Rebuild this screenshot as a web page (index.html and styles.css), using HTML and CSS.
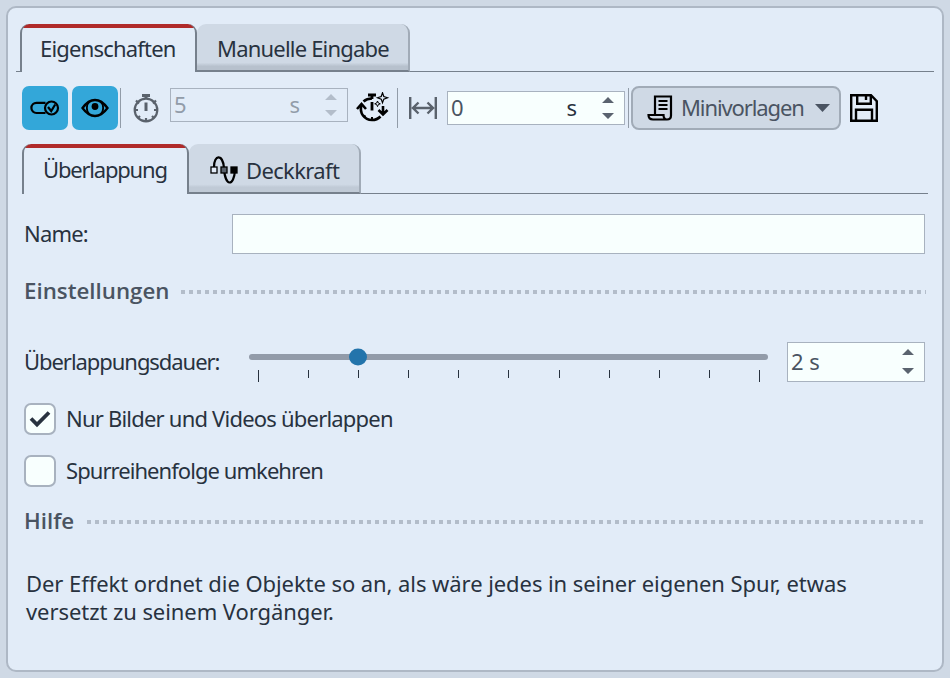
FILE: index.html
```
<!DOCTYPE html>
<html lang="de">
<head>
  <meta charset="UTF-8">
  <meta name="viewport" content="width=device-width, initial-scale=1.0">
  <title>Eigenschaften</title>
  <link rel="stylesheet" href="styles.css">
</head>
<body>
  <main class="panel">
    <nav class="tabs main-tabs">
      <div class="tab active"><span class="t-props">Eigenschaften</span></div>
      <div class="tab"><span class="t-manual">Manuelle Eingabe</span></div>
    </nav>

    <div class="toolbar">
      <button class="toggle" aria-label="Aktiv">
        <svg width="46" height="44" viewBox="0 0 46 44" fill="none" stroke="#000" stroke-width="2.200">
          <path d="M23.500 16.800H14.500a5 5 0 0 0 0 10.200H23.500"/>
          <circle cx="29.500" cy="22" r="6.500"/>
          <path d="M26 21l3.200 4 4-6.500"/>
        </svg>
      </button>
      <button class="toggle" aria-label="Sichtbar">
        <svg width="46" height="44" viewBox="0 0 46 44" fill="none" stroke="#000" stroke-width="2.300">
          <path d="M10.500 22c4-5.500 8-8 12.500-8s8.500 2.500 12.500 8c-4 5.500-8 8-12.500 8s-8.500-2.500-12.500-8z"/>
          <path d="M17.500 15.500c-3.500 3-3.500 10 0 13M28.500 15.500c3.500 3 3.500 10 0 13" stroke-width="1.800"/>
          <circle cx="23" cy="20.500" r="3.400" fill="#000" stroke="none"/>
        </svg>
      </button>
      <span class="separator"></span>
      <svg class="icon-watch" width="26" height="30" viewBox="0 0 26 30" fill="none" stroke="#5a626c" stroke-width="2.200">
        <circle cx="13" cy="17" r="11.300"/>
        <path d="M9 2.500h8M13 2v4M13 9.500v8.500" stroke-width="3"/>
        <path d="M3 7.500l3 3M23 7.500l-3 3M2 17h3M24 17h-3M13 28v-3M5 25l2-2M21 25l-2-2"/>
      </svg>
      <div class="spin disabled">
        <span>5</span><span class="unit">s</span>
        <svg class="arrows" width="12" height="22" viewBox="0 0 12 22"><path d="M0 6L6 0l6 6zM0 16h12l-6 6z"/></svg>
      </div>
      <svg class="icon-auto" width="34" height="32" viewBox="0 0 34 32" fill="none" stroke="#000" stroke-width="2.600">
        <path d="M12 3h8M16 3v4M16 10v8.500" stroke-width="2.800"/>
        <path d="M7.500 9.500c2-1.800 4.500-3 8.500-3M5.500 13c-2.500 8 3 15 10.500 15 3.500 0 6.500-1.500 8.500-3.500"/>
        <path d="M1 17l4.500-5 4.500 5M27 14v8M22.500 18l4.500 4.500 4.500-4.500"/>
        <path d="M16 28v-3M8 25l1.500-1.500" stroke-width="2"/>
        <path d="M26.500 .8l1.300 3.700 3.700 1.300-3.700 1.300-1.300 3.700-1.300-3.700-3.700-1.300 3.700-1.300z" stroke-width="1.200"/>
        <path d="M21.500 9l.8 2 2 .8-2 .8-.8 2-.8-2-2-.8 2-.8z" stroke-width="1"/>
      </svg>
      <span class="separator"></span>
      <svg class="icon-width" width="28" height="22" viewBox="0 0 28 22" fill="none" stroke="#5a626c" stroke-width="2.400">
        <path d="M1.200 0v22M26.800 0v22M4 11h20M9.500 5.500L4 11l5.500 5.500M18.500 5.500L24 11l-5.500 5.500"/>
      </svg>
      <div class="spin offset">
        <span>0</span><span class="unit">s</span>
        <svg class="arrows" width="12" height="22" viewBox="0 0 12 22"><path d="M0 6L6 0l6 6zM0 16h12l-6 6z"/></svg>
      </div>
      <span class="separator"></span>
      <button class="presets">
        <svg width="26" height="26" viewBox="0 0 26 26" fill="none" stroke="#000" stroke-width="2.200">
          <path d="M8 19V1.500h16v19c0 3-1.500 4-4 4H6c-3 0-4.500-1.500-4.500-4.500h15c0 3 1 4.500 3.500 4.500"/>
          <path d="M11.500 6h9M11.500 10h9M11.500 14h9" stroke-width="1.800"/>
        </svg>
        <span class="t-presets">Minivorlagen</span>
        <svg class="drop" width="15" height="8" viewBox="0 0 15 8"><path d="M0 0h15L7.500 8z" fill="#4a5462"/></svg>
      </button>
      <svg class="icon-save" width="28" height="28" viewBox="0 0 28 28" fill="none" stroke="#000" stroke-width="2.400">
        <path d="M1.200 1.200h19.800l5.800 6v19.600H1.200zM7.200 1.500v8.300h13.600V1.500M16 2v4M6 26.500V15.800h16v10.700"/>
      </svg>
    </div>

    <nav class="tabs sub-tabs">
      <div class="tab active"><span class="t-overlap">Überlappung</span></div>
      <div class="tab">
        <svg width="28" height="28" viewBox="0 0 28 28" fill="none" stroke="#000">
          <path d="M4 11C4-2 13-2 14 12c1 19 10 19 11 2" stroke-width="2.200"/>
          <rect x="1" y="11" width="6" height="6" fill="#e3ecf8" stroke-width="1.300"/>
          <rect x="11" y="11" width="6" height="6" fill="#5a626c" stroke-width="1.300"/>
          <rect x="21" y="11" width="6" height="6" fill="#000" stroke-width="1.300"/>
        </svg>
        <span class="t-opacity">Deckkraft</span>
      </div>
    </nav>

    <section class="form">
      <div class="name-row">
        <label class="t-name" for="name">Name:</label>
        <input type="text" id="name">
      </div>

      <h2 class="settings-title"><span>Einstellungen</span></h2>

      <div class="duration-row">
        <span class="t-duration">Überlappungsdauer:</span>
        <div class="slider">
          <div class="track"><span class="thumb"></span></div>
          <div class="ticks"><i></i><i></i><i></i><i></i><i></i><i></i><i></i><i></i><i></i><i></i><i></i></div>
        </div>
        <div class="spin duration">
          <span>2 s</span>
          <svg class="arrows" width="12" height="26" viewBox="0 0 12 26"><path d="M0 6L6 0l6 6zM0 19h12l-6 6z"/></svg>
        </div>
      </div>

      <div class="check-row">
        <span class="checkbox"><svg width="22" height="18" viewBox="0 0 22 18"><path d="M2 8.500l6 6L20 2.500" fill="none" stroke="#28323f" stroke-width="3.800"/></svg></span>
        <span class="t-only">Nur Bilder und Videos überlappen</span>
      </div>
      <div class="check-row">
        <span class="checkbox"></span>
        <span class="t-reverse">Spurreihenfolge umkehren</span>
      </div>

      <h2 class="help-title"><span>Hilfe</span></h2>
      <p class="help">Der Effekt ordnet die Objekte so an, als wäre jedes in seiner eigenen Spur, etwas<br>versetzt zu seinem Vorgänger.</p>
    </section>
  </main>
</body>
</html>
```
FILE: styles.css
```
* {
  margin: 0;
  padding: 0;
  box-sizing: border-box;
}

body {
  height: 678px;
  padding: 6px;
  background: #cfd9e5;
  color: #28323f;
  font-family: 'Noto Sans', sans-serif;
  font-size: 22px;
  line-height: 28px;
  white-space: nowrap;
  overflow: hidden;
}

svg {
  display: block;
  flex: none;
}

.panel {
  width: 938px;
  height: 666px;
  padding-top: 16px;
  background: #e2ecf8;
  border: 2px solid #aeb8c5;
  border-radius: 10px;
}

/* Tabs */
.tabs {
  display: flex;
  background: linear-gradient(#76808c, #76808c) bottom / 100% 1px no-repeat;
}

.main-tabs {
  height: 48px;
  margin: 0 8px;
  padding-left: 4px;
}

.sub-tabs {
  height: 50px;
  margin: 14px 14px 0;
}

.tab {
  display: flex;
  align-items: center;
  background: linear-gradient(#cfd9e5 84%, #b7c1cd 92%);
  border-right: 2px solid #a1abb7;
  border-bottom: 2px solid #76808c;
  border-radius: 9px 9px 0 0;
  padding-left: 20px;
}

.tab.active {
  background: linear-gradient(#b02a2a 4px, #e2ecf8 4px);
  border: 2px solid #76808c;
  border-top: 0;
  border-bottom: 0;
  padding-left: 18px;
}

.main-tabs .tab {
  width: 213px;
}

.main-tabs .active {
  width: 177px;
}

.sub-tabs .tab {
  width: 172px;
  padding: 3px 0 0 21px;
  background: linear-gradient(#cfd9e5 84%, #c0cad6 90%);
}

.sub-tabs .tab.active {
  width: 167px;
  padding: 0 0 0 18px;
  background: linear-gradient(#b02a2a 4px, #e2ecf8 4px);
}

.sub-tabs svg {
  margin-right: 8px;
}

.t-props,
.t-manual {
  letter-spacing: -0.8px;
}

.t-manual {
  padding-top: 2px;
}

.t-overlap {
  padding-left: 1px;
  letter-spacing: -1.2px;
}

.t-opacity {
  letter-spacing: -0.65px;
}

/* Toolbar */
.toolbar {
  display: flex;
  align-items: center;
  height: 44px;
  margin: 14px 0 0 14px;
}

button {
  border: none;
  font: inherit;
  flex: none;
}

.toggle {
  width: 46px;
  height: 44px;
  margin-right: 4px;
  background: #33a7d9;
  border-radius: 7px;
}

.toggle + .toggle {
  margin-right: 2px;
}

.separator {
  flex: none;
  width: 1px;
  height: 40px;
  background: #929ca8;
}

.icon-watch {
  margin: 0 11px 0 12px;
}

.spin {
  display: flex;
  align-items: center;
  width: 178px;
  height: 34px;
  padding: 0 15px 0 3px;
  background: #f8fffe;
  border: 1px solid #a8b2bf;
  color: #4a5462;
  flex: none;
}

.spin span {
  margin-top: -2px;
}

.spin .unit {
  margin-left: auto;
  margin-right: 25px;
  color: #28323f;
}

.spin .arrows {
  fill: #5a636f;
}

.spin.disabled {
  background: none;
  color: #929ca9;
  margin-top: -6px;
}

.spin.disabled .unit {
  color: #929ca9;
}

.spin.disabled .arrows {
  fill: #b3bdca;
}

.disabled .arrows,
.offset .arrows {
  margin-right: -5px;
}

.icon-auto {
  margin: 0 7px 0 8px;
}

.icon-width {
  margin: 0 10px 0 11px;
}

.offset {
  margin-right: 3px;
}

.presets {
  display: flex;
  align-items: center;
  width: 210px;
  height: 44px;
  margin: 0 9px 0 2px;
  padding-left: 14px;
  background: #cfd9e5;
  border: 2px solid #a1abb7;
  border-radius: 8px;
  color: #4a5462;
}

.t-presets {
  width: 121px;
  margin: -2px 13px 0 8px;
  letter-spacing: -1.1px;
}

/* Form */
.form {
  padding-left: 16px;
}

.name-row {
  display: flex;
  align-items: center;
  height: 40px;
  margin-top: 20px;
}

.t-name {
  width: 208px;
  margin-top: -2px;
  letter-spacing: -0.8px;
}

input {
  width: 693px;
  height: 40px;
  background: #f8fffe;
  border: 1px solid #a8b2bf;
}

h2 {
  display: flex;
  align-items: center;
  width: 902px;
  height: 32px;
  color: #4a5462;
  font-family: 'Open Sans', sans-serif;
  font-size: 22.3px;
  font-weight: 600;
}

h2 span {
  margin-top: -3px;
}

h2::after {
  content: '';
  flex: 1;
  height: 4px;
  background: repeating-linear-gradient(90deg, #b3bdca 0 4px, transparent 4px 8px);
}

.settings-title {
  margin-top: 22px;
}

.settings-title span {
  width: 157px;
}

.help-title {
  width: 899px;
  margin-top: 19px;
}

.help-title span {
  width: 63px;
}

.duration-row {
  display: flex;
  align-items: center;
  height: 40px;
  margin-top: 34px;
}

.t-duration {
  width: 225px;
  margin-top: -2px;
  letter-spacing: -1.05px;
}

.slider {
  width: 519px;
  height: 40px;
  padding-top: 12px;
  margin-right: 19px;
}

.track {
  height: 6px;
  padding-left: 100px;
  background: #929ba9;
  border-radius: 3px;
}

.thumb {
  display: block;
  width: 18px;
  height: 17px;
  background: #2374ab;
  border-radius: 50%;
  transform: translateY(-5.5px);
}

.ticks {
  display: flex;
  justify-content: space-between;
  width: 502px;
  margin: 10px 0 0 9px;
}

.ticks i {
  width: 1px;
  height: 8px;
  background: #28323f;
}

.ticks i:first-child,
.ticks i:last-child {
  height: 12px;
}

.duration {
  width: 138px;
  height: 40px;
  justify-content: space-between;
  padding-right: 10px;
}

.check-row {
  display: flex;
  align-items: center;
  height: 32px;
  margin-top: 20px;
}

.duration-row + .check-row {
  margin-top: 21px;
}

.checkbox {
  display: flex;
  align-items: center;
  justify-content: center;
  width: 32px;
  height: 32px;
  margin-right: 10px;
  background: #f8fffe;
  border: 2px solid #a8b2bf;
  border-radius: 7px;
}

.t-only,
.t-reverse {
  margin-top: -2px;
  letter-spacing: -0.79px;
}

.t-reverse {
  letter-spacing: -0.94px;
}

.help {
  margin: 31px 0 0 2px;
  letter-spacing: -0.07px;
}
```
